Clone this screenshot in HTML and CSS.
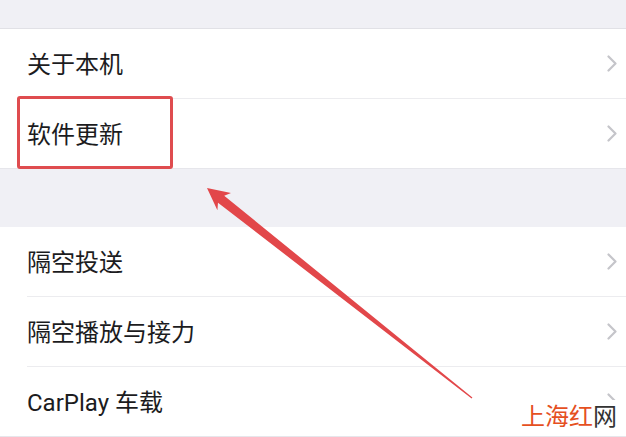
FILE: index.html
```html
<!DOCTYPE html>
<html lang="zh-CN">
<head>
    <meta charset="UTF-8">
    <meta name="viewport" content="width=device-width, initial-scale=1.0">
    <title>通用</title>
    <link rel="stylesheet" href="styles.css">
</head>
<body>
    <div class="page">
        <div class="gap-top"></div>

        <div class="group">
            <div class="row">
                <div class="row-inner">
                    <span class="label">关于本机</span>
                    <svg class="chevron" width="10" height="17" viewBox="0 0 10 17"><polyline points="1.5,1.5 8.5,8.5 1.5,15.5"/></svg>
                </div>
            </div>
            <div class="row">
                <div class="row-inner">
                    <span class="label">软件更新</span>
                    <svg class="chevron" width="10" height="17" viewBox="0 0 10 17"><polyline points="1.5,1.5 8.5,8.5 1.5,15.5"/></svg>
                </div>
            </div>
        </div>

        <div class="gap"></div>

        <div class="group">
            <div class="row">
                <div class="row-inner">
                    <span class="label">隔空投送</span>
                    <svg class="chevron" width="10" height="17" viewBox="0 0 10 17"><polyline points="1.5,1.5 8.5,8.5 1.5,15.5"/></svg>
                </div>
            </div>
            <div class="row">
                <div class="row-inner">
                    <span class="label">隔空播放与接力</span>
                    <svg class="chevron" width="10" height="17" viewBox="0 0 10 17"><polyline points="1.5,1.5 8.5,8.5 1.5,15.5"/></svg>
                </div>
            </div>
            <div class="row">
                <div class="row-inner">
                    <span class="label">CarPlay 车载</span>
                    <svg class="chevron" width="10" height="17" viewBox="0 0 10 17"><polyline points="1.5,1.5 8.5,8.5 1.5,15.5"/></svg>
                </div>
            </div>
        </div>

        <!-- annotation -->
        <div class="mark"></div>
        <svg class="arrow" width="626" height="437" viewBox="0 0 626 437">
            <polygon points="207,188 231,193.1 224.2,195.7 472.4,397.5 471.6,398.5 218,202.7 217.4,210.3"/>
        </svg>
        <div class="watermark"><span class="wm-red">上海红</span><span class="wm-dark">网</span></div>
    </div>
</body>
</html>
```

FILE: styles.css
```css
body {
    margin: 0;
    background-color: #f0f0f5;
    font-family: Roboto, "Noto Sans CJK SC", sans-serif;
    color: #1c1c1e;
}

.page {
    position: relative;
    width: 626px;
    height: 437px;
    overflow: hidden;
}

.gap-top {
    height: 28px;
    border-bottom: 1px solid #e1e1e6;
}

.gap {
    height: 58px;
}

.group {
    background-color: #fff;
    border-bottom: 1px solid #e6e6eb;
}

.row {
    padding-left: 27px;
}

.row-inner {
    display: flex;
    align-items: center;
    justify-content: space-between;
    height: 69px;
    padding-right: 9px;
    border-bottom: 1px solid #ececef;
}

.row:last-child .row-inner {
    border-bottom: none;
}

.label {
    font-size: 24px;
    line-height: 1;
    padding-top: 2px;
}

.chevron polyline {
    fill: none;
    stroke: #c5c5ca;
    stroke-width: 2.2;
    stroke-linecap: round;
    stroke-linejoin: round;
}

.mark {
    position: absolute;
    left: 17px;
    top: 96px;
    width: 156px;
    height: 73px;
    box-sizing: border-box;
    border: 3px solid #df4c4f;
    border-radius: 3px;
}

.arrow {
    position: absolute;
    left: 0;
    top: 0;
    pointer-events: none;
}

.arrow polygon {
    fill: #e2474a;
}

.watermark {
    position: absolute;
    left: 519px;
    top: 400px;
    padding: 0 2px;
    background-color: #fff;
    font-family: "Noto Sans CJK SC", sans-serif;
    font-size: 24px;
    line-height: 30px;
}

.wm-red {
    color: #e5501f;
}

.wm-dark {
    color: #333;
}
```
